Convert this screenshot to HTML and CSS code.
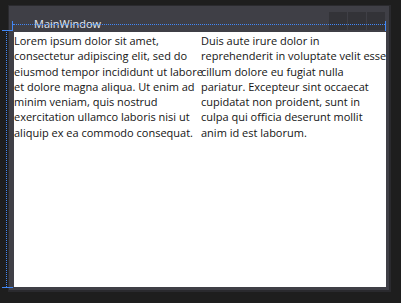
FILE: index.html
```html
<!doctype html>
<html>
<head>
    <meta charset="UTF-8">
    <link rel="stylesheet" href="styles.css">
</head>
<body>
<div class="desktop">
    <div class="window">
        <div class="title-bar">
            <div class="title">MainWindow</div>
            <div class="caption-buttons">
                <div class="caption-btn"></div>
                <div class="caption-btn"></div>
                <div class="caption-btn"></div>
            </div>
        </div>
        <div class="client">
            <div class="col">Lorem ipsum dolor sit amet,<br>consectetur adipiscing elit, sed do<br>eiusmod tempor incididunt ut labore<br>et dolore magna aliqua. Ut enim ad<br>minim veniam, quis nostrud<br>exercitation ullamco laboris nisi ut<br>aliquip ex ea commodo consequat.</div>
            <div class="col">Duis aute irure dolor in<br>reprehenderit in voluptate velit esse<br>cillum dolore eu fugiat nulla<br>pariatur. Excepteur sint occaecat<br>cupidatat non proident, sunt in<br>culpa qui officia deserunt mollit<br>anim id est laborum.</div>
        </div>
    </div>

    <!-- designer adorners -->
    <div class="guide guide-top"></div>
    <div class="guide guide-left"></div>
    <div class="tick tick-right"></div>
    <div class="tick tick-left-v"></div>
    <div class="tick tick-left-h"></div>
    <div class="tick tick-bottom-h"></div>
</div>
</body>
</html>
```

FILE: styles.css
```css
body {
    margin: 0;
    background-color: #1e1e1e;
    font-family: "Open Sans", "Noto Sans", sans-serif;
}

.desktop {
    position: relative;
    height: 303px;
    box-sizing: border-box;
    padding: 5px 0 0 8px;
}

.window {
    width: 383px;
    height: 287px;
    box-sizing: border-box;
    background-color: #3f3f46;
    border: 1px solid #2a2a2e;
    border-right: 2px solid #2a2a2e;
    border-bottom: 2px solid #2a2a2e;
    padding: 0 3px 3px 5px;
    display: flex;
    flex-direction: column;
}

.title-bar {
    height: 26px;
    margin-left: -5px;
    display: flex;
    align-items: flex-start;
}

.title {
    padding: 10px 0 0 25px;
    font-size: 11px;
    line-height: 15px;
    color: #e2e8f2;
}

.caption-buttons {
    margin: 6px 1px 0 auto;
    display: flex;
    gap: 1px;
}

.caption-btn {
    width: 18px;
    height: 18px;
    background-color: #333338;
}

.client {
    flex: 1;
    background-color: #fff;
    display: grid;
    grid-template-columns: 187px 1fr;
    overflow: hidden;
    padding-top: 1px;
    font-size: 11px;
    line-height: 15.3px;
    color: #141414;
    white-space: nowrap;
}

.guide {
    position: absolute;
}

.guide-top {
    left: 13px;
    top: 24px;
    width: 372px;
    border-top: 1px dotted #4287f5;
}

.guide-left {
    left: 6px;
    top: 32px;
    height: 255px;
    border-left: 1px dotted #4287f5;
}

.tick {
    position: absolute;
    background-color: #4287f5;
}

.tick-right {
    left: 385px;
    top: 21px;
    width: 1px;
    height: 10px;
}

.tick-left-v {
    left: 12px;
    top: 21px;
    width: 1px;
    height: 10px;
}

.tick-left-h {
    left: 2px;
    top: 30px;
    width: 11px;
    height: 1px;
}

.tick-bottom-h {
    left: 2px;
    top: 287px;
    width: 11px;
    height: 1px;
}
```
